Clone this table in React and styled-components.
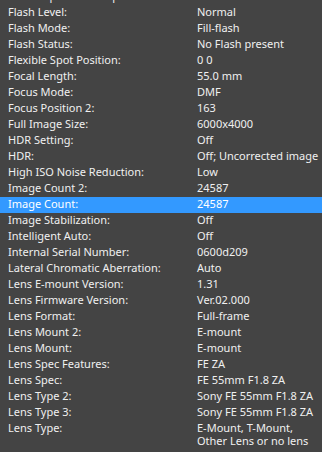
import React from 'react'
import styled, { createGlobalStyle } from 'styled-components'

const Global = createGlobalStyle`
  html, body {
    margin: 0;
    padding: 0;
    background: #444444;
    overflow: hidden;
  }
`

const Panel = styled.div`
  width: 322px;
  height: 452px;
  overflow: hidden;
  background: #444444;
  font-family: 'Noto Sans', 'DejaVu Sans', sans-serif;
  font-size: 11px;
  color: #f0f0f0;
`

const List = styled.div`
  margin-top: -11px;
`

const Row = styled.div`
  display: grid;
  grid-template-columns: 189px 1fr;
  padding: 0 0 3px 8px;
  line-height: 13px;
  background: ${(p) => (p.selected ? '#3399ff' : 'transparent')};
  color: ${(p) => (p.selected ? '#ffffff' : '#f0f0f0')};
`

const Label = styled.div`
  white-space: nowrap;
`

const Value = styled.div`
  white-space: ${(p) => (p.multiline ? 'normal' : 'nowrap')};
  max-width: ${(p) => (p.multiline ? '114px' : 'none')};
`

const rows = [
  ['Flash Exposure Comp. Set:', '0'],
  ['Flash Level:', 'Normal'],
  ['Flash Mode:', 'Fill-flash'],
  ['Flash Status:', 'No Flash present'],
  ['Flexible Spot Position:', '0 0'],
  ['Focal Length:', '55.0 mm'],
  ['Focus Mode:', 'DMF'],
  ['Focus Position 2:', '163'],
  ['Full Image Size:', '6000x4000'],
  ['HDR Setting:', 'Off'],
  ['HDR:', 'Off; Uncorrected image'],
  ['High ISO Noise Reduction:', 'Low'],
  ['Image Count 2:', '24587'],
  ['Image Count:', '24587'],
  ['Image Stabilization:', 'Off'],
  ['Intelligent Auto:', 'Off'],
  ['Internal Serial Number:', '0600d209'],
  ['Lateral Chromatic Aberration:', 'Auto'],
  ['Lens E-mount Version:', '1.31'],
  ['Lens Firmware Version:', 'Ver.02.000'],
  ['Lens Format:', 'Full-frame'],
  ['Lens Mount 2:', 'E-mount'],
  ['Lens Mount:', 'E-mount'],
  ['Lens Spec Features:', 'FE ZA'],
  ['Lens Spec:', 'FE 55mm F1.8 ZA'],
  ['Lens Type 2:', 'Sony FE 55mm F1.8 ZA'],
  ['Lens Type 3:', 'Sony FE 55mm F1.8 ZA'],
  ['Lens Type:', 'E-Mount, T-Mount, Other Lens or no lens'],
]

export default function App() {
  return (
    <Panel>
      <Global />
      <List>
        {rows.map(([label, value]) => (
          <Row key={label} selected={label === 'Image Count:'}>
            <Label>{label}</Label>
            <Value multiline={value.length > 24}>{value}</Value>
          </Row>
        ))}
      </List>
    </Panel>
  )
}
